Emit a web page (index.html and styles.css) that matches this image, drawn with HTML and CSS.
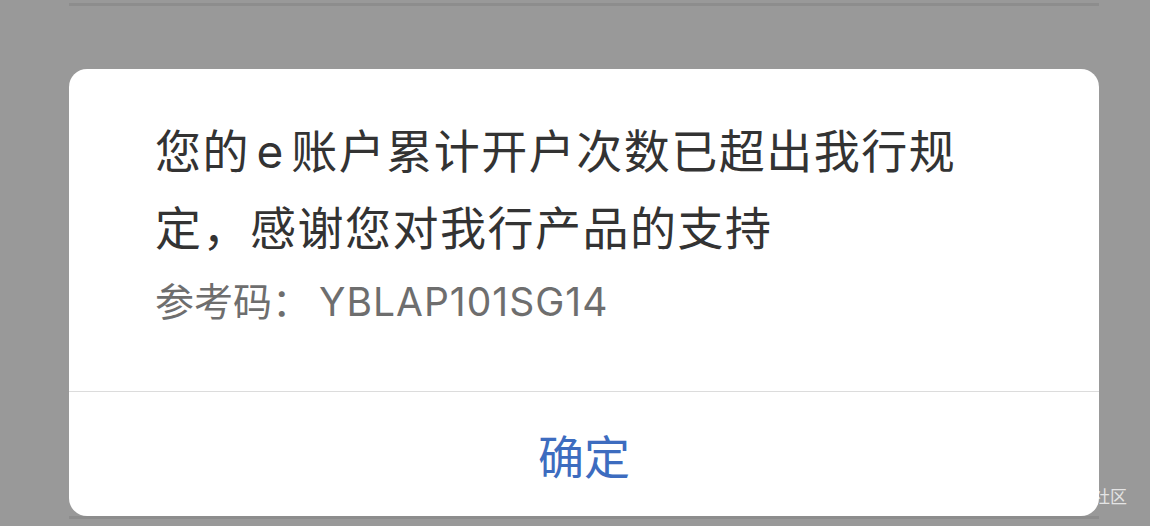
FILE: index.html
```html
<!DOCTYPE html>
<html lang="zh-CN">
<head>
    <meta charset="UTF-8">
    <meta name="viewport" content="width=device-width, initial-scale=1.0">
    <title>提示</title>
    <link rel="stylesheet" href="styles.css">
</head>
<body>
    <div class="screen">
        <div class="row-rule"></div>

        <div class="alert">
            <div class="alert-body">
                <p class="alert-msg">您的 e 账户累计开户次数已超出我行规定，感谢您对我行产品的支持</p>
                <p class="alert-code">参考码：<span class="code-no">YBLAP101SG14</span></p>
            </div>
            <button class="alert-btn">确定</button>
        </div>

        <div class="row-rule"></div>

        <span class="watermark">社区</span>
    </div>
</body>
</html>
```

FILE: styles.css
```css
body {
    margin: 0;
    padding: 0;
    background-color: #999999;
    font-family: "Inter", "Noto Sans CJK SC", sans-serif;
}

.screen {
    position: relative;
    width: 1150px;
    height: 526px;
    overflow: hidden;
    padding-top: 3px;
    box-sizing: border-box;
}

/* list separators of the page behind the mask */
.row-rule {
    width: 1030px;
    height: 3px;
    margin-left: 69px;
    background-color: #8d8d8d;
}

.alert {
    position: relative;
    z-index: 1;
    width: 1030px;
    margin: 63px 0 0 69px;
    background-color: #fff;
    border-radius: 18px;
    overflow: hidden;
}

.alert-body {
    padding: 44px 86px 64px;
}

.alert-msg {
    margin: 0;
    font-size: 46px;
    line-height: 77px;
    letter-spacing: 1.5px;
    word-spacing: -8px;
    color: #333;
}

.alert-code {
    margin: 10px 0 0;
    font-size: 39px;
    line-height: 50px;
    color: #6e6e6e;
}

.code-no {
    padding-left: 8px;
    letter-spacing: 1px;
}

.alert-btn {
    display: block;
    width: 100%;
    height: 125px;
    padding: 0;
    border: none;
    border-top: 1px solid #dcdcdc;
    background: none;
    font-family: inherit;
    font-size: 46px;
    color: #3d6cbf;
    cursor: pointer;
}

.watermark {
    position: absolute;
    left: 1093px;
    top: 483px;
    font-size: 17px;
    color: #e4e4e4;
}
```
